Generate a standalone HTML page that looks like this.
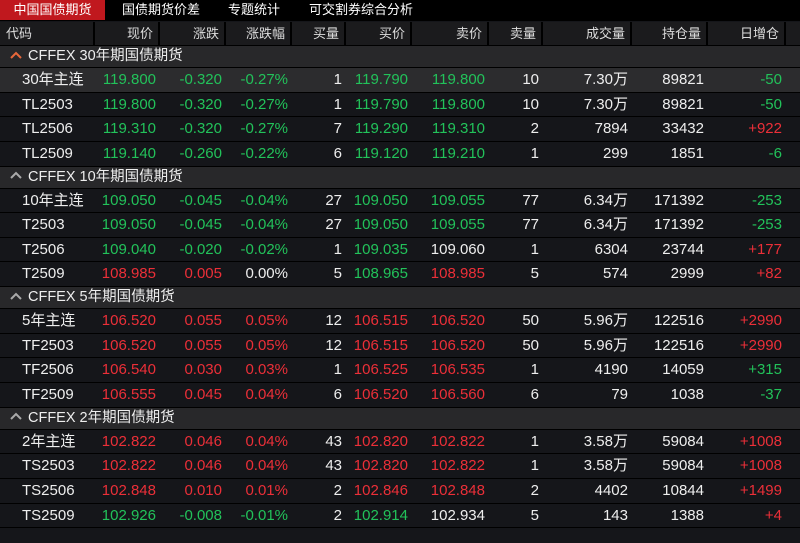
<!DOCTYPE html><html><head><meta charset="utf-8"><style>
*{margin:0;padding:0;box-sizing:border-box}
body{width:800px;height:543px;background:#15161a;font-family:"Liberation Sans","Noto Sans CJK SC",sans-serif;overflow:hidden;position:relative;color:#e8e8e8}
.tabs{position:absolute;left:0;top:0;width:800px;height:21px;background:#000;font-size:13px;color:#fff}
.tabs span{position:absolute;top:0;line-height:20px}
.t1{left:0;width:105px;background:#c0181e;text-align:center}
.hdr{position:absolute;top:22px;left:0;width:800px;height:24px;background:#000;display:flex}
.hdr div{background:#1b1b1d;margin-right:2px;height:23px;line-height:23px;font-size:13px;color:#ddd;text-align:right;padding-right:5px}
.row{display:flex;height:24.65px;line-height:23.6px;border-bottom:1px solid #000;font-size:15px}
.grp{height:22px;line-height:21px;background:#28282a;border-bottom:1px solid #000;font-size:14.5px;color:#eee;padding-left:10px}
.grp svg{display:inline-block;vertical-align:middle;margin-right:6px;margin-top:-3px}
.row div{text-align:right;padding-right:4px}
.row div:first-child{text-align:left;padding-left:22px}
.g{color:#22c25a}.r{color:#ec2f38}.w{color:#eee}
.sel{background:#2c2c2e}
</style></head><body>
<div class="tabs"><span class="t1">中国国债期货</span><span style="left:122px">国债期货价差</span><span style="left:228px">专题统计</span><span style="left:309px">可交割券综合分析</span></div>
<div class="hdr">
<div style="width:93px;text-align:left;padding-left:6px">代码</div><div style="width:63px">现价</div><div style="width:64px">涨跌</div><div style="width:64px">涨跌幅</div><div style="width:52px">买量</div><div style="width:64px">买价</div><div style="width:75px">卖价</div><div style="width:52px">卖量</div><div style="width:87px">成交量</div><div style="width:74px">持仓量</div><div style="width:76px">日增仓</div><div style="width:14px;margin:0"></div>
</div>
<div style="position:absolute;top:46px;left:0;width:800px" id="t">
<style>.c0{width:95px}.c1{width:65px}.c2{width:66px}.c3{width:66px}.c4{width:54px}.c5{width:66px}.c6{width:77px}.c7{width:54px}.c8{width:89px}.c9{width:76px}.c10{width:78px}</style>
<div class="grp"><svg width="12" height="8" viewBox="0 0 12 8"><path d="M1 7L6 2L11 7" fill="none" stroke="#e8683a" stroke-width="2"/></svg>CFFEX 30年期国债期货</div>
<div class="row sel"><div class="c0 w">30年主连</div><div class="c1 g">119.800</div><div class="c2 g">-0.320</div><div class="c3 g">-0.27%</div><div class="c4 w">1</div><div class="c5 g">119.790</div><div class="c6 g">119.800</div><div class="c7 w">10</div><div class="c8 w">7.30万</div><div class="c9 w">89821</div><div class="c10 g">-50</div></div>
<div class="row"><div class="c0 w">TL2503</div><div class="c1 g">119.800</div><div class="c2 g">-0.320</div><div class="c3 g">-0.27%</div><div class="c4 w">1</div><div class="c5 g">119.790</div><div class="c6 g">119.800</div><div class="c7 w">10</div><div class="c8 w">7.30万</div><div class="c9 w">89821</div><div class="c10 g">-50</div></div>
<div class="row"><div class="c0 w">TL2506</div><div class="c1 g">119.310</div><div class="c2 g">-0.320</div><div class="c3 g">-0.27%</div><div class="c4 w">7</div><div class="c5 g">119.290</div><div class="c6 g">119.310</div><div class="c7 w">2</div><div class="c8 w">7894</div><div class="c9 w">33432</div><div class="c10 r">+922</div></div>
<div class="row"><div class="c0 w">TL2509</div><div class="c1 g">119.140</div><div class="c2 g">-0.260</div><div class="c3 g">-0.22%</div><div class="c4 w">6</div><div class="c5 g">119.120</div><div class="c6 g">119.210</div><div class="c7 w">1</div><div class="c8 w">299</div><div class="c9 w">1851</div><div class="c10 g">-6</div></div>
<div class="grp"><svg width="12" height="8" viewBox="0 0 12 8"><path d="M1 7L6 2L11 7" fill="none" stroke="#aaa" stroke-width="2"/></svg>CFFEX 10年期国债期货</div>
<div class="row"><div class="c0 w">10年主连</div><div class="c1 g">109.050</div><div class="c2 g">-0.045</div><div class="c3 g">-0.04%</div><div class="c4 w">27</div><div class="c5 g">109.050</div><div class="c6 g">109.055</div><div class="c7 w">77</div><div class="c8 w">6.34万</div><div class="c9 w">171392</div><div class="c10 g">-253</div></div>
<div class="row"><div class="c0 w">T2503</div><div class="c1 g">109.050</div><div class="c2 g">-0.045</div><div class="c3 g">-0.04%</div><div class="c4 w">27</div><div class="c5 g">109.050</div><div class="c6 g">109.055</div><div class="c7 w">77</div><div class="c8 w">6.34万</div><div class="c9 w">171392</div><div class="c10 g">-253</div></div>
<div class="row"><div class="c0 w">T2506</div><div class="c1 g">109.040</div><div class="c2 g">-0.020</div><div class="c3 g">-0.02%</div><div class="c4 w">1</div><div class="c5 g">109.035</div><div class="c6 w">109.060</div><div class="c7 w">1</div><div class="c8 w">6304</div><div class="c9 w">23744</div><div class="c10 r">+177</div></div>
<div class="row"><div class="c0 w">T2509</div><div class="c1 r">108.985</div><div class="c2 r">0.005</div><div class="c3 w">0.00%</div><div class="c4 w">5</div><div class="c5 g">108.965</div><div class="c6 r">108.985</div><div class="c7 w">5</div><div class="c8 w">574</div><div class="c9 w">2999</div><div class="c10 r">+82</div></div>
<div class="grp"><svg width="12" height="8" viewBox="0 0 12 8"><path d="M1 7L6 2L11 7" fill="none" stroke="#aaa" stroke-width="2"/></svg>CFFEX 5年期国债期货</div>
<div class="row"><div class="c0 w">5年主连</div><div class="c1 r">106.520</div><div class="c2 r">0.055</div><div class="c3 r">0.05%</div><div class="c4 w">12</div><div class="c5 r">106.515</div><div class="c6 r">106.520</div><div class="c7 w">50</div><div class="c8 w">5.96万</div><div class="c9 w">122516</div><div class="c10 r">+2990</div></div>
<div class="row"><div class="c0 w">TF2503</div><div class="c1 r">106.520</div><div class="c2 r">0.055</div><div class="c3 r">0.05%</div><div class="c4 w">12</div><div class="c5 r">106.515</div><div class="c6 r">106.520</div><div class="c7 w">50</div><div class="c8 w">5.96万</div><div class="c9 w">122516</div><div class="c10 r">+2990</div></div>
<div class="row"><div class="c0 w">TF2506</div><div class="c1 r">106.540</div><div class="c2 r">0.030</div><div class="c3 r">0.03%</div><div class="c4 w">1</div><div class="c5 r">106.525</div><div class="c6 r">106.535</div><div class="c7 w">1</div><div class="c8 w">4190</div><div class="c9 w">14059</div><div class="c10 g">+315</div></div>
<div class="row"><div class="c0 w">TF2509</div><div class="c1 r">106.555</div><div class="c2 r">0.045</div><div class="c3 r">0.04%</div><div class="c4 w">6</div><div class="c5 r">106.520</div><div class="c6 r">106.560</div><div class="c7 w">6</div><div class="c8 w">79</div><div class="c9 w">1038</div><div class="c10 g">-37</div></div>
<div class="grp"><svg width="12" height="8" viewBox="0 0 12 8"><path d="M1 7L6 2L11 7" fill="none" stroke="#aaa" stroke-width="2"/></svg>CFFEX 2年期国债期货</div>
<div class="row"><div class="c0 w">2年主连</div><div class="c1 r">102.822</div><div class="c2 r">0.046</div><div class="c3 r">0.04%</div><div class="c4 w">43</div><div class="c5 r">102.820</div><div class="c6 r">102.822</div><div class="c7 w">1</div><div class="c8 w">3.58万</div><div class="c9 w">59084</div><div class="c10 r">+1008</div></div>
<div class="row"><div class="c0 w">TS2503</div><div class="c1 r">102.822</div><div class="c2 r">0.046</div><div class="c3 r">0.04%</div><div class="c4 w">43</div><div class="c5 r">102.820</div><div class="c6 r">102.822</div><div class="c7 w">1</div><div class="c8 w">3.58万</div><div class="c9 w">59084</div><div class="c10 r">+1008</div></div>
<div class="row"><div class="c0 w">TS2506</div><div class="c1 r">102.848</div><div class="c2 r">0.010</div><div class="c3 r">0.01%</div><div class="c4 w">2</div><div class="c5 r">102.846</div><div class="c6 r">102.848</div><div class="c7 w">2</div><div class="c8 w">4402</div><div class="c9 w">10844</div><div class="c10 r">+1499</div></div>
<div class="row"><div class="c0 w">TS2509</div><div class="c1 g">102.926</div><div class="c2 g">-0.008</div><div class="c3 g">-0.01%</div><div class="c4 w">2</div><div class="c5 g">102.914</div><div class="c6 w">102.934</div><div class="c7 w">5</div><div class="c8 w">143</div><div class="c9 w">1388</div><div class="c10 r">+4</div></div>
</div>
</body></html>
